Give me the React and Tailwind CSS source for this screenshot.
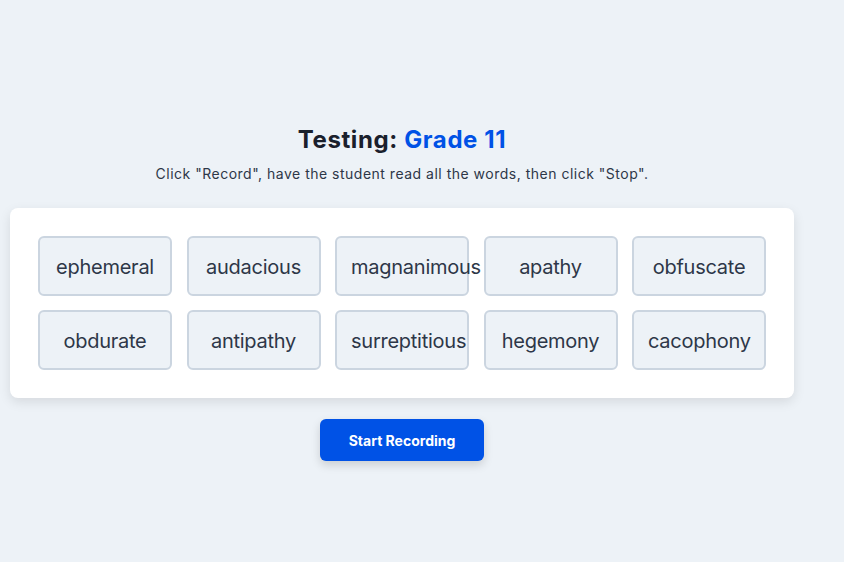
import { useState } from 'react';

const WORDS = [
  'ephemeral', 'audacious', 'magnanimous', 'apathy', 'obfuscate',
  'obdurate', 'antipathy', 'surreptitious', 'hegemony', 'cacophony'
];

const App = () => {
  const [recording, setRecording] = useState(false);

  return (
    <div className="min-h-[562px] w-full bg-[#edf2f7] font-['Inter',sans-serif] text-[#1a202c]">
      <div className="w-[784px] ml-[10px] pt-[124px] flex flex-col items-center">
        <h1 className="text-[24px] leading-[32px] font-bold tracking-[0.6px] text-[#1a202c]">
          Testing: <span className="text-[#0052e6]">Grade 11</span>
        </h1>
        <p className="mt-[8px] text-[14px] leading-[20px] tracking-[0.5px] text-[#2d3748]">
          Click "Record", have the student read all the words, then click "Stop".
        </p>

        {/* Word grid */}
        <div className="mt-[24px] w-full bg-white rounded-lg p-[28px] shadow-[0_4px_12px_rgba(0,0,0,0.1)]">
          <div className="grid grid-cols-5 gap-x-[14.5px] gap-y-[14px]">
            {WORDS.map(w => (
              <div
                key={w}
                className="h-[60px] border-2 border-[#cbd5e0] bg-[#edf2f7] rounded-md px-[14px] pt-[2px] flex items-center"
              >
                <span className="block w-full text-center text-[20px] leading-[28px] tracking-[-0.25px] text-[#2d3748] whitespace-nowrap">{w}</span>
              </div>
            ))}
          </div>
        </div>

        <button
          onClick={() => setRecording(!recording)}
          className="mt-[21px] h-[42px] px-[29px] bg-[#0052e6] text-white text-[14px] font-bold rounded-md shadow-[0_4px_10px_rgba(0,0,0,0.15)]"
        >
          {recording ? 'Stop' : 'Start Recording'}
        </button>
      </div>
    </div>
  );
};

export default App;
